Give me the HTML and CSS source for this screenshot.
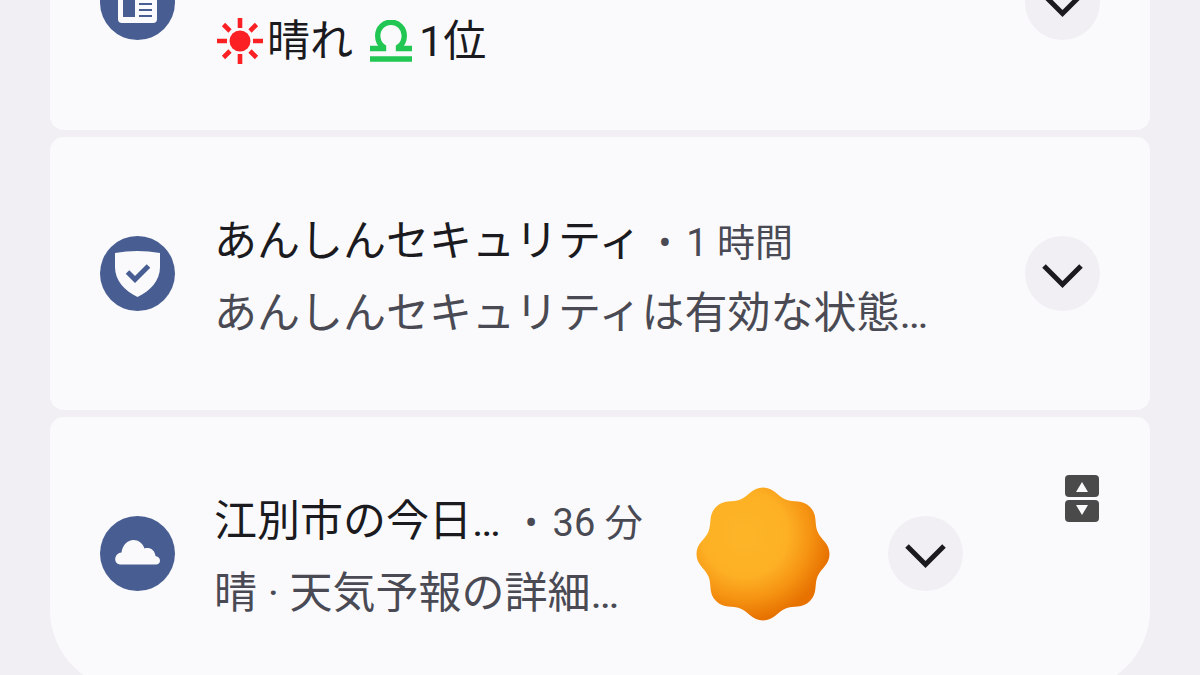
FILE: index.html
```
<!DOCTYPE html>
<html lang="ja">
<head>
    <meta charset="UTF-8">
    <meta name="viewport" content="width=device-width, initial-scale=1.0">
    <title>通知</title>
    <link rel="stylesheet" href="styles.css">
</head>
<body>
    <main class="notifications">
        <article class="card card-scrolled">
            <div class="app-icon">
                <svg viewBox="0 0 75 75" aria-hidden="true">
                    <rect x="18" y="20" width="39" height="38" rx="4" fill="#fafafc"/>
                    <path d="M23 27h12v25H23z" fill="#485e92"/>
                    <path d="M39 27h13M39 33h13M39 39h13M39 45h13M39 51h13" stroke="#485e92" stroke-width="2"/>
                </svg>
            </div>
            <div class="content">
                <p class="message message-main">
                    <svg class="glyph glyph-sun" viewBox="0 0 48 48" aria-hidden="true">
                        <circle cx="24" cy="24" r="10.5" fill="#fb2023"/>
                        <path d="M24 1v10M24 37v10M1 24h10M37 24h10M7.5 7.5l6.5 6.5M34 34l6.5 6.5M7.5 40.5l6.5-6.5M34 14l6.5-6.5" stroke="#fb2023" stroke-width="4.6" fill="none"/>
                    </svg>
                    <span>晴れ</span>
                    <svg class="glyph glyph-libra" viewBox="0 0 42 42" aria-hidden="true">
                        <path d="M0 28.5h13.5v-1.5C8 23.5 7.7 19 7.7 15.5a13.3 13.3 0 0 1 26.6 0c0 3.500-.3 8-5.8 11.500v1.5H42" stroke="#22c653" stroke-width="5.4" fill="none"/>
                        <path d="M0 39h42" stroke="#22c653" stroke-width="5.4"/>
                    </svg>
                    <span>1位</span>
                </p>
            </div>
            <button class="expand" type="button" aria-label="展開">
                <svg viewBox="0 0 75 75" aria-hidden="true"><path d="M19 30l18.5 18.5L56 30"/></svg>
            </button>
        </article>

        <article class="card">
            <div class="app-icon">
                <svg viewBox="0 0 75 75" aria-hidden="true">
                    <path d="M15 17q22-4 45 0v14c0 14-10 24-22.500 30C25 55 15 45 15 31z" fill="#fafafc"/>
                    <path d="M27.500 36l7.500 7.500L48.500 30" stroke="#485e92" stroke-width="5" fill="none"/>
                </svg>
            </div>
            <div class="content">
                <div class="heading">
                    <h2 class="title">あんしんセキュリティ</h2>
                    <span class="dot">•</span>
                    <time class="time">1 時間</time>
                </div>
                <p class="message">あんしんセキュリティは有効な状態…</p>
            </div>
            <button class="expand" type="button" aria-label="展開">
                <svg viewBox="0 0 75 75" aria-hidden="true"><path d="M19 30l18.5 18.5L56 30"/></svg>
            </button>
        </article>

        <article class="card card-last">
            <div class="app-icon">
                <svg viewBox="0 0 75 75" aria-hidden="true">
                    <path d="M20 48.500a5 5 0 0 1-4.800-5c0-4 3-6.800 6.300-7C22.500 29 27.500 24 33.500 24c5 0 9 3 11 8.500 5-1.500 10 1 11 7.500 3 .5 4.700 2.500 4.500 5-.2 2-1.700 3.500-4 3.500z" fill="#fafafc"/>
                </svg>
            </div>
            <div class="content">
                <div class="heading">
                    <h2 class="title">江別市の今日…</h2>
                    <span class="dot">•</span>
                    <time class="time">36 分</time>
                </div>
                <p class="message">晴 · 天気予報の詳細…</p>
            </div>
            <svg class="weather" viewBox="-67 -67 134 134" role="img" aria-label="晴">
                <defs>
                    <radialGradient id="sunFill" gradientUnits="userSpaceOnUse" cx="-18" cy="-20" r="86">
                        <stop offset="0" stop-color="#fdb528"/>
                        <stop offset="0.5" stop-color="#fdb024"/>
                        <stop offset="0.75" stop-color="#f69413"/>
                        <stop offset="1" stop-color="#e77200"/>
                    </radialGradient>
                </defs>
                <path fill="url(#sunFill)" d="M0-66.500
                    C11-66.500 14.300-57.900 22.600-54.500S39.200-54.800 47-47
                    S51.100-30.900 54.500-22.600S66.500-11 66.500 0
                    S57.900 14.300 54.500 22.600S54.800 39.200 47 47
                    S30.900 51.100 22.600 54.500S11 66.500 0 66.500
                    S-14.300 57.900-22.600 54.500S-39.200 54.800-47 47
                    S-51.100 30.900-54.500 22.600S-66.500 11-66.500 0
                    S-57.900-14.300-54.500-22.600S-54.800-39.200-47-47
                    S-30.900-51.100-22.600-54.500S-11-66.500 0-66.500z"/>
            </svg>
            <button class="expand" type="button" aria-label="展開">
                <svg viewBox="0 0 75 75" aria-hidden="true"><path d="M19 30l18.5 18.5L56 30"/></svg>
            </button>
            <div class="stepper">
                <button class="step" type="button" aria-label="上へ">
                    <svg viewBox="0 0 34 22" aria-hidden="true"><path d="M17 7l6 10H11z"/></svg>
                </button>
                <button class="step" type="button" aria-label="下へ">
                    <svg viewBox="0 0 34 22" aria-hidden="true"><path d="M17 15l6-10H11z"/></svg>
                </button>
            </div>
        </article>
    </main>
</body>
</html>
```
FILE: styles.css
```
* {
    margin: 0;
    padding: 0;
    box-sizing: border-box;
}

body {
    font-family: Roboto, "Noto Sans CJK JP", sans-serif;
    background: #f1eff4;
    color: #1b1b1f;
    height: 100vh;
    overflow: hidden;
}

.notifications {
    display: flex;
    flex-direction: column;
    gap: 7px;
    padding: 0 50px;
}

.card {
    display: flex;
    align-items: flex-start;
    background: #fafafc;
    border-radius: 14px;
    padding: 68px 50px 61px;
}

/* first card is partly scrolled out of view */
.card-scrolled {
    margin-top: -35px;
    padding-top: 0;
    padding-bottom: 53px;
}

.card-last {
    border-bottom-left-radius: 80px;
    border-bottom-right-radius: 80px;
}

.app-icon {
    flex: none;
    width: 75px;
    height: 75px;
    margin-top: 31px;
    margin-right: 39px;
    border-radius: 50%;
    background: #485e92;
}

.app-icon svg,
.expand svg,
.step svg {
    display: block;
    width: 100%;
}

.card-scrolled .app-icon,
.card-scrolled .expand {
    margin-top: 0;
}

.content {
    flex: 1;
    min-width: 0;
    white-space: nowrap;
}

.card-scrolled .content {
    padding-top: 40px;
}

.heading {
    display: flex;
    align-items: baseline;
    height: 72px;
    line-height: 72px;
}

.title {
    font-size: 43px;
    font-weight: 400;
}

.dot,
.time {
    font-size: 38px;
    color: #4a4a54;
}

.dot {
    margin: 0 15px 0 17px;
}

.card-last .dot {
    margin-left: 24px;
}

.message {
    height: 72px;
    line-height: 72px;
    font-size: 43px;
    color: #4a4a54;
}

.message-main {
    display: flex;
    align-items: center;
    color: #1b1b1f;
}

.glyph {
    flex: none;
}

.glyph-sun {
    width: 48px;
    height: 48px;
    margin: 0 3px 0 2px;
}

.glyph-libra {
    width: 42px;
    height: 42px;
    margin: 0 7px 0 17px;
}

.weather {
    flex: none;
    width: 134px;
    margin-top: 2px;
    margin-right: 58px;
}

.expand {
    flex: none;
    width: 75px;
    height: 75px;
    margin-top: 31px;
    border: none;
    border-radius: 50%;
    background: #f1eff4;
    cursor: pointer;
}

.expand path {
    fill: none;
    stroke: #1b1b1f;
    stroke-width: 5;
}

.stepper {
    flex: none;
    display: flex;
    flex-direction: column;
    gap: 3px;
    width: 34px;
    margin-top: -10px;
    margin-left: 102px;
}

.card-last {
    padding-right: 51px;
}

.step {
    height: 22px;
    border: none;
    border-radius: 4px;
    background: #4a4a4a;
    cursor: pointer;
}

.step path {
    fill: #fafafc;
}
```
